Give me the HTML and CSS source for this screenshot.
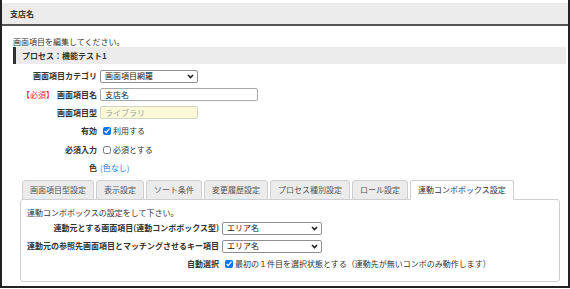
FILE: index.html
```html
<!DOCTYPE html>
<html lang="ja">
<head>
  <meta charset="UTF-8" />
  <title>支店名</title>
  <link rel="stylesheet" href="styles.css">
</head>
<body>
  <div class="frame">
    <div class="title-bar">支店名</div>

    <div class="content">
      <p class="lead">画面項目を編集してください。</p>
      <div class="process">プロセス：機能テスト1</div>

      <!-- 基本項目 -->
      <div class="form">
        <div class="label">画面項目カテゴリ</div>
        <div class="field">
          <div class="select select-cat"><span>画面項目網羅</span>
            <svg width="7" height="5" viewBox="0 0 7 5"><path d="M1 1l2.5 2.5L6 1" fill="none" stroke="#222" stroke-width="1.6"/></svg>
          </div>
        </div>

        <div class="label"><span class="required">【必須】</span>画面項目名</div>
        <div class="field"><div class="input input-name">支店名</div></div>

        <div class="label">画面項目型</div>
        <div class="field"><div class="input input-type">ライブラリ</div></div>

        <div class="label">有効</div>
        <div class="field"><label class="check"><input type="checkbox" checked>利用する</label></div>

        <div class="label">必須入力</div>
        <div class="field"><label class="check"><input type="checkbox">必須とする</label></div>

        <div class="label">色</div>
        <div class="field"><a class="link">(色なし)</a></div>
      </div>

      <!-- タブ -->
      <div class="tabs">
        <div class="tab">画面項目型設定</div>
        <div class="tab">表示設定</div>
        <div class="tab">ソート条件</div>
        <div class="tab">変更履歴設定</div>
        <div class="tab">プロセス種別設定</div>
        <div class="tab">ロール設定</div>
        <div class="tab active">連動コンボボックス設定</div>
      </div>

      <div class="panel">
        <p class="panel-lead">連動コンボボックスの設定をして下さい。</p>
        <div class="panel-form">
          <div class="label">連動元とする画面項目(連動コンボボックス型)</div>
          <div class="field">
            <div class="select select-wide"><span>エリア名</span>
              <svg width="7" height="5" viewBox="0 0 7 5"><path d="M1 1l2.5 2.5L6 1" fill="none" stroke="#222" stroke-width="1.6"/></svg>
            </div>
          </div>

          <div class="label">連動元の参照先画面項目とマッチングさせるキー項目</div>
          <div class="field">
            <div class="select select-wide"><span>エリア名</span>
              <svg width="7" height="5" viewBox="0 0 7 5"><path d="M1 1l2.5 2.5L6 1" fill="none" stroke="#222" stroke-width="1.6"/></svg>
            </div>
          </div>

          <div class="label">自動選択</div>
          <div class="field"><label class="check"><input type="checkbox" checked>最初の１件目を選択状態とする（連動先が無いコンボのみ動作します）</label></div>
        </div>
      </div>
    </div>
  </div>
</body>
</html>
```

FILE: styles.css
```css
body {
  margin: 0;
  background: #fff;
  font-family: "Noto Sans CJK JP", "Noto Sans", sans-serif;
  font-size: 8px;
  line-height: 12px;
  color: #333;
}

.frame {
  box-sizing: border-box;
  width: 570px;
  height: 288px;
  padding-top: 3px;
  border: 2px solid #222;
  border-top: none;
  overflow: hidden;
}

.title-bar {
  height: 21px;
  line-height: 21px;
  padding-left: 8px;
  background: #ebebeb;
  border-bottom: 2px solid #555;
  font-weight: 700;
}

.content {
  padding: 0 2px 0 11px;
}

.lead {
  margin: 10px 0 0;
  line-height: 11px;
}

.process {
  height: 17px;
  line-height: 17px;
  padding-left: 6px;
  background: #ebebeb;
  border-left: 3px solid #333;
  font-weight: 700;
}

/* 基本項目フォーム */
.form {
  display: grid;
  grid-template-columns: 84px 1fr;
  grid-auto-rows: 18.4px;
  column-gap: 3px;
  align-items: center;
  margin-top: 3px;
}

.label {
  display: flex;
  justify-content: flex-end;
  font-weight: 700;
  white-space: nowrap;
}

.required {
  color: #e8202a;
  font-weight: 400;
  margin-right: 3px;
}

.field {
  display: flex;
  align-items: center;
}

.select {
  box-sizing: border-box;
  height: 13px;
  display: flex;
  align-items: center;
  justify-content: space-between;
  padding: 0 3px 0 4px;
  border: 1px solid #8f8f8f;
  border-radius: 2px;
  background: #fff;
  color: #222;
}

.select-cat {
  width: 98px;
}

.select-wide {
  width: 100px;
}

.input {
  box-sizing: border-box;
  height: 13px;
  line-height: 11px;
  padding: 0 4px;
  border: 1px solid #a8a8a8;
  border-radius: 2px;
  color: #222;
}

.input-name {
  width: 158px;
}

.input-type {
  width: 98px;
  background: #fafad9;
  border-color: #d4d4c4;
  color: #a0a0a0;
}

.check {
  display: flex;
  align-items: center;
}

.check input {
  width: 8px;
  height: 8px;
  margin: 0 2px 0 3px;
}

.link {
  color: #2a7ad2;
  text-decoration: none;
}

/* タブ */
.tabs {
  display: flex;
  gap: 2px;
  margin: 3px 0 -1px 9px;
}

.tab {
  height: 18px;
  line-height: 18px;
  padding: 0 7px;
  border: 1px solid #cfcfcf;
  border-radius: 3px 3px 0 0;
  background: #ebebeb;
  color: #555;
}

.tab.active {
  position: relative;
  z-index: 1;
  background: #fff;
  border-bottom-color: #fff;
  color: #333;
}

.panel {
  width: 540px;
  box-sizing: border-box;
  margin-left: 7px;
  padding: 7px 0 8px 6px;
  border: 1px solid #cfcfcf;
  border-radius: 3px;
}

.panel-lead {
  margin: 0;
}

.panel-form {
  display: grid;
  grid-template-columns: 192px 1fr;
  grid-auto-rows: 18px;
  column-gap: 3px;
  align-items: center;
}
```
